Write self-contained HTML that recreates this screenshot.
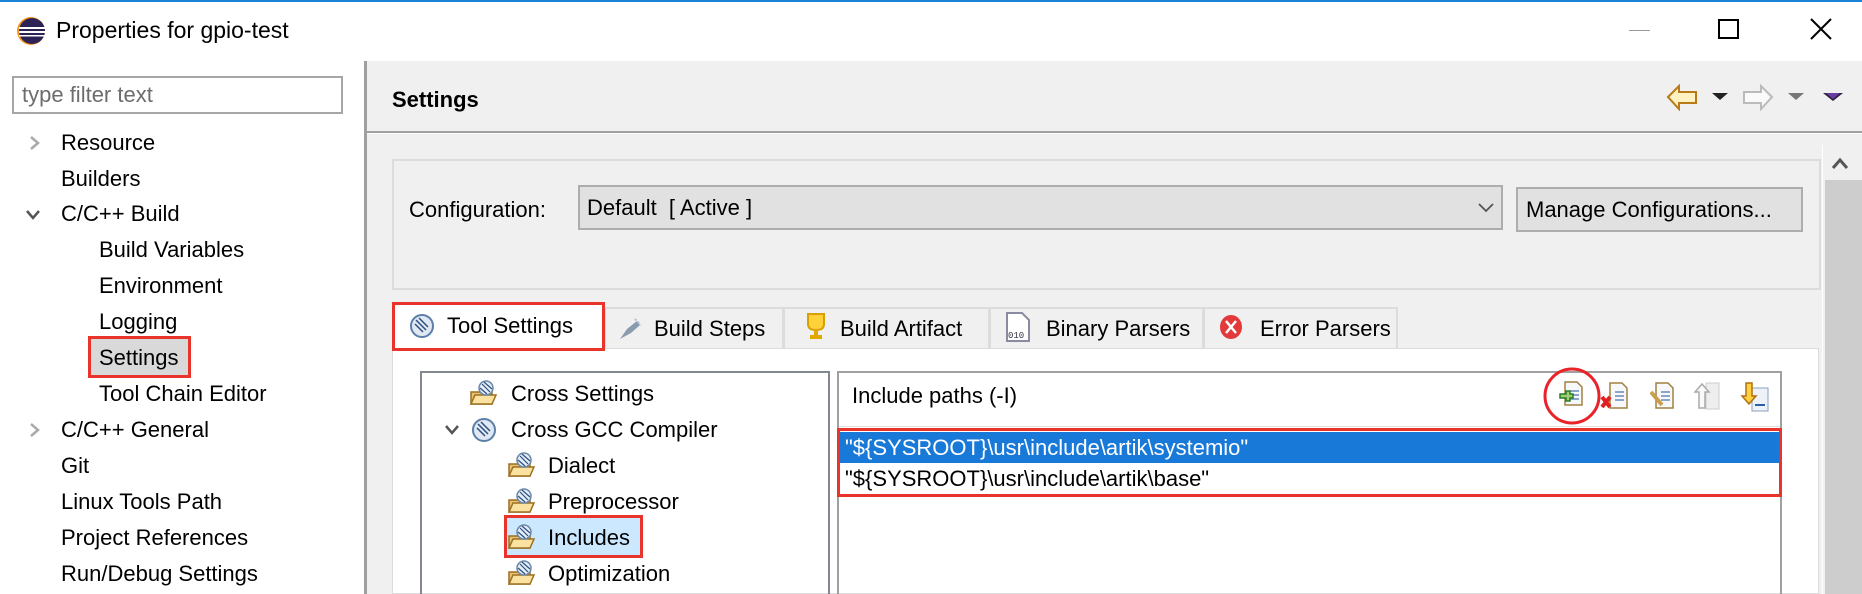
<!DOCTYPE html>
<html><head><meta charset="utf-8"><style>
*{margin:0;padding:0;box-sizing:border-box}
body{width:1862px;height:594px;overflow:hidden;background:#fff;font-family:"Liberation Sans",sans-serif;font-size:22px;color:#000;position:relative}
.a{position:absolute;white-space:nowrap}
.t{position:absolute;white-space:nowrap;line-height:26px}
</style></head><body>
<div class="a" style="left:0;top:0;width:1862px;height:2px;background:#1883d7"></div>
<!-- title icon -->
<svg class="a" style="left:16px;top:16px" width="30" height="30" viewBox="0 0 30 30"><circle cx="15" cy="15" r="14" fill="#f7941e"/><circle cx="16" cy="15" r="13" fill="#2c2255"/><rect x="3" y="11" width="26" height="2" fill="#fff"/><rect x="3" y="15" width="26" height="2" fill="#fff"/><rect x="3" y="19" width="26" height="1.5" fill="#fff"/></svg>
<div class="t" style="left:56px;top:17px;font-size:23px">Properties for gpio-test</div>
<!-- window controls -->
<div class="a" style="left:1629px;top:30px;width:21px;height:1px;background:#999"></div>
<div class="a" style="left:1718px;top:19px;width:21px;height:20px;border:2px solid #000"></div>
<svg class="a" style="left:1810px;top:18px" width="22" height="22"><path d="M1 1L21 21M21 1L1 21" stroke="#000" stroke-width="2"/></svg>
<!-- left panel -->
<div class="a" style="left:12px;top:76px;width:331px;height:38px;border:2px solid #a6a6a6"></div>
<div class="t" style="left:22px;top:82px;color:#6d6d6d">type filter text</div>
<svg class="a" style="left:28px;top:135px" width="14" height="16"><path d="M3 2L10 8L3 14" fill="none" stroke="#aaa" stroke-width="2.5"/></svg>
<svg class="a" style="left:25px;top:209px" width="16" height="12"><path d="M2 2L8 9L14 2" fill="none" stroke="#555" stroke-width="2.5"/></svg>
<svg class="a" style="left:28px;top:422px" width="14" height="16"><path d="M3 2L10 8L3 14" fill="none" stroke="#aaa" stroke-width="2.5"/></svg>
<div class="t" style="left:61px;top:130px">Resource</div>
<div class="t" style="left:61px;top:166px">Builders</div>
<div class="t" style="left:61px;top:201px">C/C++ Build</div>
<div class="t" style="left:99px;top:237px">Build Variables</div>
<div class="t" style="left:99px;top:273px">Environment</div>
<div class="t" style="left:99px;top:309px">Logging</div>
<div class="a" style="left:88px;top:336px;width:103px;height:42px;background:#d9d9d9;border:3px solid #e8342a"></div>
<div class="t" style="left:99px;top:345px">Settings</div>
<div class="t" style="left:99px;top:381px">Tool Chain Editor</div>
<div class="t" style="left:61px;top:417px">C/C++ General</div>
<div class="t" style="left:61px;top:453px">Git</div>
<div class="t" style="left:61px;top:489px">Linux Tools Path</div>
<div class="t" style="left:61px;top:525px">Project References</div>
<div class="t" style="left:61px;top:561px">Run/Debug Settings</div>
<!-- right panel -->
<div class="a" style="left:364px;top:61px;width:3px;height:533px;background:#a0a0a0"></div>
<div class="a" style="left:367px;top:61px;width:1495px;height:533px;background:#f0f0f0"></div>
<div class="a" style="left:367px;top:131px;width:1495px;height:2px;background:#a0a0a0"></div>
<div class="a" style="left:367px;top:133px;width:1495px;height:1px;background:#fff"></div>
<div class="t" style="left:392px;top:87px;font-weight:bold">Settings</div>
<svg class="a" style="left:1666px;top:84px" width="32" height="27" viewBox="0 0 32 27"><path d="M2 13L13 2V8H30V19H13V25Z" fill="#fff1c0" stroke="#b97a18" stroke-width="2"/></svg>
<svg class="a" style="left:1711px;top:92px" width="18" height="9"><path d="M1 1H17L9 8Z" fill="#222"/></svg>
<svg class="a" style="left:1742px;top:84px" width="32" height="27" viewBox="0 0 32 27"><path d="M30 13L19 2V8H2V19H19V25Z" fill="#fafafa" stroke="#bbb" stroke-width="2"/></svg>
<svg class="a" style="left:1787px;top:92px" width="18" height="9"><path d="M1 1H17L9 8Z" fill="#777"/></svg>
<svg class="a" style="left:1822px;top:92px" width="22" height="10"><path d="M1 1H21L11 9Z" fill="#2d1f3f"/><path d="M4 1H18L11 7Z" fill="#6a3ea0"/></svg>
<!-- scrollbar -->
<div class="a" style="left:1822px;top:145px;width:40px;height:449px;background:#f0f0f0;border-left:1px solid #fff"></div>
<div class="a" style="left:1825px;top:180px;width:37px;height:414px;background:#cdcdcd"></div>
<svg class="a" style="left:1831px;top:156px" width="18" height="14"><path d="M2 12L9 4L16 12" fill="none" stroke="#555" stroke-width="3"/></svg>
<!-- config group -->
<div class="a" style="left:392px;top:159px;width:1429px;height:131px;border:2px solid #dcdcdc"></div>
<div class="t" style="left:409px;top:197px">Configuration:</div>
<div class="a" style="left:578px;top:185px;width:925px;height:45px;background:#e1e1e1;border:2px solid #adadad"></div>
<div class="t" style="left:587px;top:195px">Default&nbsp; [ Active ]</div>
<svg class="a" style="left:1477px;top:202px" width="18" height="12"><path d="M2 2L9 9L16 2" fill="none" stroke="#555" stroke-width="1.8"/></svg>
<div class="a" style="left:1516px;top:187px;width:287px;height:45px;background:#e1e1e1;border:2px solid #adadad"></div>
<div class="t" style="left:1526px;top:197px">Manage Configurations...</div>
<!-- tabs -->
<div class="a" style="left:392px;top:348px;width:1427px;height:246px;background:#fff;border:1px solid #dcdcdc"></div>
<div class="a" style="left:604px;top:307px;width:180px;height:41px;border:2px solid #dcdcdc;border-bottom:none"></div>
<div class="a" style="left:783px;top:307px;width:207px;height:41px;border:2px solid #dcdcdc;border-bottom:none"></div>
<div class="a" style="left:989px;top:307px;width:215px;height:41px;border:2px solid #dcdcdc;border-bottom:none"></div>
<div class="a" style="left:1203px;top:307px;width:195px;height:41px;border:2px solid #dcdcdc;border-bottom:none"></div>
<div class="a" style="left:392px;top:302px;width:213px;height:49px;background:#fff;border:3px solid #e8342a"></div>
<svg class="a" style="left:409px;top:313px" width="26" height="26" viewBox="0 0 26 26"><circle cx="13" cy="13" r="11" fill="#dfe8f3" stroke="#5a7fa8" stroke-width="2"/><path d="M7 7L17 17M10 5L19 14M6 11L14 19" stroke="#2a4f80" stroke-width="1.5"/></svg>
<div class="t" style="left:447px;top:313px">Tool Settings</div>
<svg class="a" style="left:617px;top:315px" width="26" height="26"><path d="M3 24L10 14L14 18ZM10 14L20 6L23 10L14 18Z" fill="#8a9bb0"/><path d="M18 4L24 10" stroke="#b0c0d0" stroke-width="2" stroke-dasharray="2 2"/></svg>
<div class="t" style="left:654px;top:316px">Build Steps</div>
<svg class="a" style="left:803px;top:312px" width="26" height="30"><path d="M5 2H21V12Q21 18 13 18Q5 18 5 12Z" fill="#ffd23a" stroke="#d8a000" stroke-width="2"/><rect x="11" y="18" width="4" height="5" fill="#e0a800"/><rect x="7" y="23" width="12" height="4" fill="#e0a800"/></svg>
<div class="t" style="left:840px;top:316px">Build Artifact</div>
<svg class="a" style="left:1005px;top:312px" width="26" height="30"><path d="M2 1H17L24 8V29H2Z" fill="#fff" stroke="#8a8aa0" stroke-width="2"/><text x="3" y="26" font-size="9" font-family="Liberation Mono" fill="#334">010</text></svg>
<div class="t" style="left:1046px;top:316px">Binary Parsers</div>
<svg class="a" style="left:1219px;top:314px" width="24" height="26"><ellipse cx="12" cy="13" rx="11" ry="12" fill="#e23a3a"/><path d="M7 7L17 19M17 7L7 19" stroke="#fff" stroke-width="2.5"/></svg>
<div class="t" style="left:1260px;top:316px">Error Parsers</div>
<!-- inner tree -->
<div class="a" style="left:420px;top:371px;width:410px;height:223px;border:2px solid #828790;border-bottom:none"></div>
<svg class="a" style="left:444px;top:424px" width="16" height="12"><path d="M2 2L8 9L14 2" fill="none" stroke="#555" stroke-width="2.5"/></svg>
<div class="a" style="left:504px;top:515px;width:139px;height:43px;background:#cce8ff;border:3px solid #e8342a"></div>
<svg width="0" height="0" style="position:absolute"><defs>
<g id="fi"><path d="M1 12H10L12 9H22V24H1Z" fill="#e8c070" stroke="#9a7020" stroke-width="1.5"/><path d="M1 24L5 15H26L22 24Z" fill="#fbe2a0" stroke="#9a7020" stroke-width="1.5"/><circle cx="16" cy="8" r="7" fill="#e5edf6" stroke="#6a88aa" stroke-width="1.5"/><path d="M12 4L20 12M14 2L22 9M10 8L17 14" stroke="#2a4f80" stroke-width="1.2"/></g>
<g id="gi"><circle cx="13" cy="13" r="11" fill="#dfe8f3" stroke="#5a7fa8" stroke-width="2"/><path d="M7 7L17 17M10 5L19 14M6 11L14 19" stroke="#2a4f80" stroke-width="1.5"/></g>
</defs></svg>
<svg class="a" style="left:470px;top:380px" width="28" height="28"><use href="#fi"/></svg>
<div class="t" style="left:511px;top:381px">Cross Settings</div>
<svg class="a" style="left:471px;top:417px" width="26" height="26"><use href="#gi"/></svg>
<div class="t" style="left:511px;top:417px">Cross GCC Compiler</div>
<svg class="a" style="left:508px;top:452px" width="28" height="28"><use href="#fi"/></svg>
<div class="t" style="left:548px;top:453px">Dialect</div>
<svg class="a" style="left:508px;top:488px" width="28" height="28"><use href="#fi"/></svg>
<div class="t" style="left:548px;top:489px">Preprocessor</div>
<svg class="a" style="left:508px;top:524px" width="28" height="28"><use href="#fi"/></svg>
<div class="t" style="left:548px;top:525px">Includes</div>
<svg class="a" style="left:508px;top:560px" width="28" height="28"><use href="#fi"/></svg>
<div class="t" style="left:548px;top:561px">Optimization</div>
<!-- right box -->
<div class="a" style="left:837px;top:371px;width:945px;height:223px;border:2px solid #a0a0a0;border-bottom:none"></div>
<div class="a" style="left:839px;top:426px;width:941px;height:1px;background:#e0e0e0"></div>
<div class="t" style="left:852px;top:383px">Include paths (-I)</div>
<svg class="a" style="left:1543px;top:367px" width="60" height="58"><ellipse cx="29" cy="29" rx="27" ry="27" fill="none" stroke="#e8232a" stroke-width="3"/><path d="M22 15H34L39 20V38H22Z" fill="#f6f8fb" stroke="#a08040" stroke-width="1.5"/><path d="M27 24H36M27 28H36M27 32H36" stroke="#6a88bb" stroke-width="1.5"/><path d="M17 27H23V24H27V27H30V31H27V34H23V31H17Z" fill="#9ed070" stroke="#2a7a2a" stroke-width="1.5"/></svg>
<svg class="a" style="left:1600px;top:380px" width="34" height="34"><path d="M10 3H22L27 8V28H10Z" fill="#f6f8fb" stroke="#a08040" stroke-width="1.5"/><path d="M15 12H24M15 16H24M15 20H24" stroke="#6a88bb" stroke-width="1.5"/><path d="M2 17L10 27M10 17L2 27" stroke="#e02020" stroke-width="4"/></svg>
<svg class="a" style="left:1648px;top:380px" width="34" height="34"><path d="M8 3H20L25 8V28H8Z" fill="#f6f8fb" stroke="#a08040" stroke-width="1.5"/><path d="M13 12H22M13 16H22M13 20H22" stroke="#6a88bb" stroke-width="1.5"/><path d="M3 12L14 25" stroke="#c9a050" stroke-width="4"/></svg>
<svg class="a" style="left:1693px;top:380px" width="30" height="34"><rect x="13" y="3" width="13" height="26" fill="#eee" stroke="#ccc"/><path d="M9 4L2 12H6V28H12V12H16Z" fill="#fafafa" stroke="#aaa" stroke-width="1.5"/></svg>
<svg class="a" style="left:1740px;top:380px" width="30" height="34"><rect x="12" y="8" width="16" height="23" fill="#eef2f8" stroke="#8aa0c0"/><path d="M15 25H25" stroke="#2a5fa8" stroke-width="2"/><path d="M6 3H12V16H16L9 24L2 16H6Z" fill="#ffd040" stroke="#b07010" stroke-width="1.5"/></svg>
<div class="a" style="left:837px;top:428px;width:945px;height:69px;border:3px solid #e8342a"></div>
<div class="a" style="left:840px;top:432px;width:939px;height:31px;background:#1979d8"></div>
<div class="t" style="left:845px;top:435px;color:#fff">"${SYSROOT}\usr\include\artik\systemio"</div>
<div class="t" style="left:845px;top:466px">"${SYSROOT}\usr\include\artik\base"</div>
</body></html>
